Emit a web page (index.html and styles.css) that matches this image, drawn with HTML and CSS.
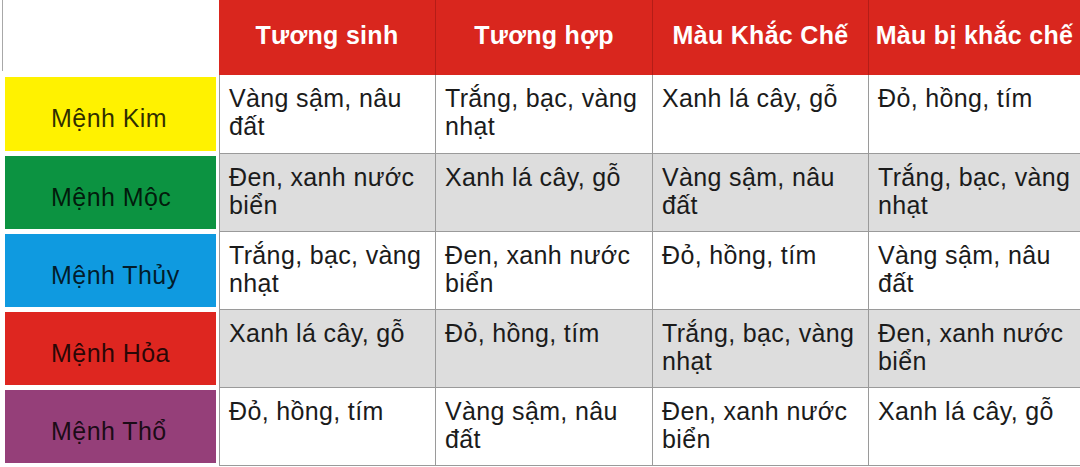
FILE: index.html
```html
<!DOCTYPE html>
<html lang="vi">
<head>
<meta charset="utf-8">
<title>Màu sắc theo mệnh</title>
<link rel="stylesheet" href="styles.css">
</head>
<body>
<div class="table">
  <div class="corner"></div>
  <div class="th first">Tương sinh</div>
  <div class="th">Tương hợp</div>
  <div class="th">Màu Khắc Chế</div>
  <div class="th">Màu bị khắc chế</div>

  <div class="label row1"><div class="chip kim">Mệnh Kim</div></div>
  <div class="td row1 white">Vàng sậm, nâu đất</div>
  <div class="td row1 white">Trắng, bạc, vàng nhạt</div>
  <div class="td row1 white">Xanh lá cây, gỗ</div>
  <div class="td row1 white">Đỏ, hồng, tím</div>

  <div class="label"><div class="chip moc">Mệnh Mộc</div></div>
  <div class="td gray">Đen, xanh nước biển</div>
  <div class="td gray">Xanh lá cây, gỗ</div>
  <div class="td gray">Vàng sậm, nâu đất</div>
  <div class="td gray">Trắng, bạc, vàng nhạt</div>

  <div class="label"><div class="chip thuy">Mệnh Thủy</div></div>
  <div class="td white">Trắng, bạc, vàng nhạt</div>
  <div class="td white">Đen, xanh nước biển</div>
  <div class="td white">Đỏ, hồng, tím</div>
  <div class="td white">Vàng sậm, nâu đất</div>

  <div class="label"><div class="chip hoa">Mệnh Hỏa</div></div>
  <div class="td gray">Xanh lá cây, gỗ</div>
  <div class="td gray">Đỏ, hồng, tím</div>
  <div class="td gray">Trắng, bạc, vàng nhạt</div>
  <div class="td gray">Đen, xanh nước biển</div>

  <div class="label"><div class="chip tho">Mệnh Thổ</div></div>
  <div class="td white">Đỏ, hồng, tím</div>
  <div class="td white">Vàng sậm, nâu đất</div>
  <div class="td white">Đen, xanh nước biển</div>
  <div class="td white">Xanh lá cây, gỗ</div>
</div>
</body>
</html>
```

FILE: styles.css
```css
html, body {
  margin: 0;
  padding: 0;
  background: #ffffff;
}

body {
  width: 1080px;
  height: 467px;
  overflow: hidden;
  font-family: "Liberation Sans", Arial, sans-serif;
}

.table {
  display: grid;
  grid-template-columns: 219px 216px 217px 216px 212px;
  grid-template-rows: 75px 79px 78px 78px 78px 78px;
}

.corner {
  align-self: start;
  height: 71px;
  margin-left: 2px;
  border-left: 1px solid #a8a8a8;
}

.th {
  background: #d9261e;
  color: #ffffff;
  font-weight: bold;
  font-size: 25px;
  line-height: 28px;
  letter-spacing: 0.3px;
  display: flex;
  align-items: center;
  justify-content: center;
  padding-bottom: 5px;
  white-space: nowrap;
  border-left: 1px solid #b41d17;
  box-sizing: border-box;
}

.th.first {
  border-left: none;
}

.label {
  padding: 2px 3px 3px 5px;
  box-sizing: border-box;
  display: flex;
}

.chip {
  flex: 1;
  display: flex;
  align-items: center;
  padding-left: 46px;
  padding-top: 8px;
  box-sizing: border-box;
  font-size: 25px;
  line-height: 28px;
  letter-spacing: 0.45px;
  color: rgba(0, 0, 0, 0.82);
  white-space: nowrap;
}

.kim { background: #fff200; }
.moc { background: #0c9341; }
.thuy { background: #0f9ae0; }
.hoa { background: #de2620; }
.tho { background: #953f79; }

.td {
  box-sizing: border-box;
  border-left: 1px solid #9a9a9a;
  border-bottom: 1px solid #9a9a9a;
  padding: 9px 4px 0 9px;
  font-size: 25px;
  line-height: 28px;
  letter-spacing: 0.35px;
  color: #1b1b1b;
}

.white { background: #ffffff; }
.gray { background: #dddddd; }
```
